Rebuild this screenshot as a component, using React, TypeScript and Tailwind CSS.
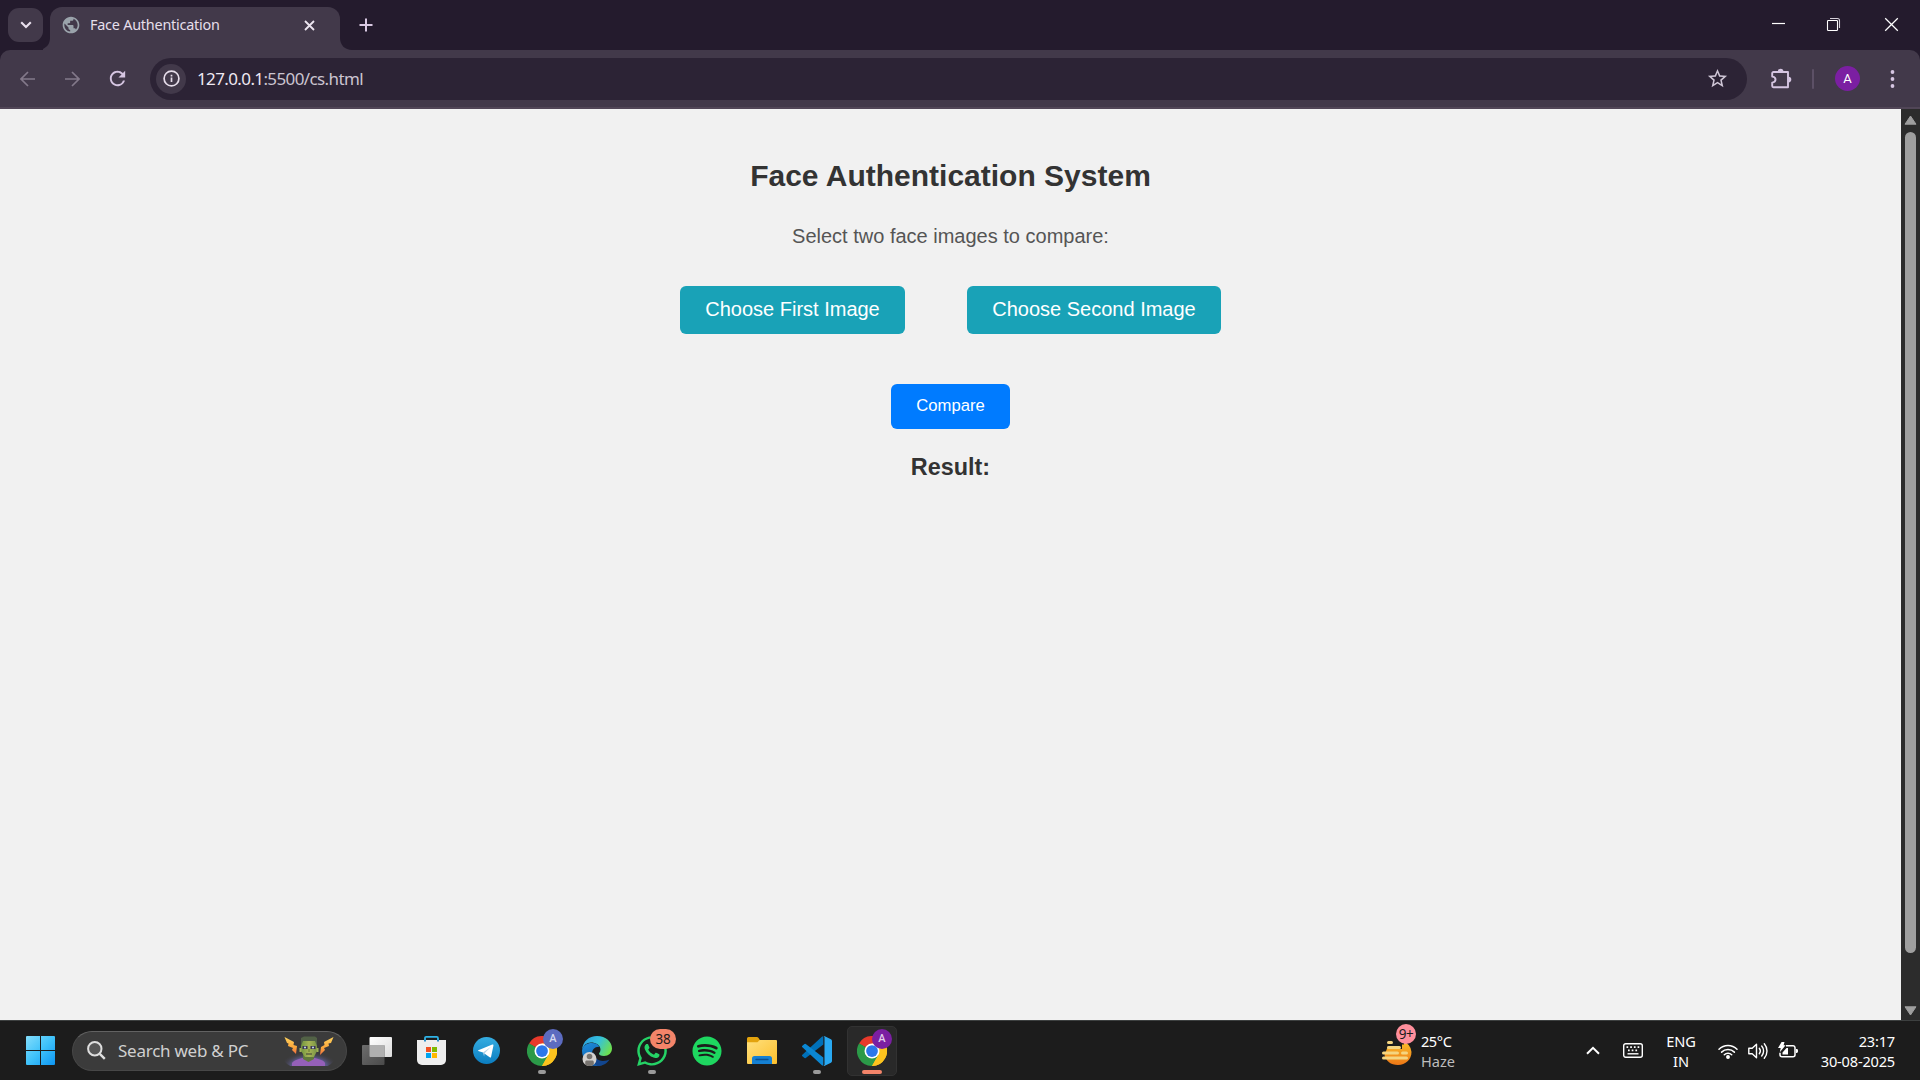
import React from "react";
import { MdPublic, MdStarBorder, MdRefresh } from "react-icons/md";
import { FaSpotify, FaWhatsapp } from "react-icons/fa";

const segoe = "font-['Noto_Sans',sans-serif]";

function TabStrip() {
  return (
    <div className="flex h-[50px] items-start bg-[#241b2d]">
      <div className="ml-2 mt-2 flex h-[34px] w-[35px] items-center justify-center rounded-[11px] bg-[#42394a]">
        <svg width="12" height="8" viewBox="0 0 12 8" fill="none" stroke="#e9e0ee" strokeWidth="2.1">
          <path d="M1.2 1.2 6 6l4.8-4.8" />
        </svg>
      </div>
      <svg className="mt-[38px]" width="7" height="12" viewBox="0 0 7 12">
        <path d="M7 0v12H-6C2 12 7 7 7 0z" fill="#42394a" />
      </svg>
      <div className="mt-[7px] flex h-[43px] w-[290px] items-start rounded-t-[12px] bg-[#42394a] pl-[11px]">
        <MdPublic className="mt-2 size-[20px]" color="#9aa3ab" />
        <div className="ml-[9px] mt-[7px] w-[220px] whitespace-nowrap text-[14.4px] leading-[22px] tracking-[-0.22px] text-[#e6dfea]">
          Face Authentication
        </div>
        <svg className="-ml-[6px] mt-[13px] shrink-0" width="11" height="11" viewBox="0 0 11 11" stroke="#ece5f0" strokeWidth="1.8">
          <path d="M1 1l9 9M10 1l-9 9" />
        </svg>
      </div>
      <svg className="mt-[38px]" width="12" height="12" viewBox="0 0 12 12">
        <path d="M0 0v12h12C5 12 0 7 0 0z" fill="#42394a" />
      </svg>
      <svg className="ml-[7px] mt-[18px]" width="14" height="14" viewBox="0 0 14 14" stroke="#d9c9e3" strokeWidth="2">
        <path d="M7 .5v13M.5 7h13" />
      </svg>
      <div className="ml-auto flex pt-[17px]">
        <svg width="15" height="14" viewBox="0 0 15 14" stroke="#fff" strokeWidth="1.2">
          <path d="M1 6.5h13" />
        </svg>
        <svg className="ml-[40px]" width="16" height="16" viewBox="0 0 16 16" fill="none" stroke="#fff" strokeWidth="1.1">
          <rect x="1.5" y="3.5" width="10" height="10" rx=".8" />
          <path d="M4 1.5h7.5a2 2 0 0 1 2 2V11" stroke="#d6d1da" />
        </svg>
        <svg className="ml-[42px] mr-[21px]" width="15" height="15" viewBox="0 0 15 15" stroke="#fff" strokeWidth="1.25">
          <path d="M1.2 1.2l12.6 12.6M13.8 1.2 1.2 13.8" />
        </svg>
      </div>
    </div>
  );
}

function Toolbar() {
  return (
    <div className="h-[59px] bg-[#241b2d]">
      <div className="flex h-[59px] items-center rounded-t-[10px] border-b-2 border-[#514657] bg-[#42394a]">
        <svg className="ml-5" width="15" height="16" viewBox="0 0 15 16" fill="none" stroke="#83798a" strokeWidth="1.7">
          <path d="M15 8H1.2M8 1 1 8l7 7" />
        </svg>
        <svg className="ml-[30px]" width="15" height="16" viewBox="0 0 15 16" fill="none" stroke="#83798a" strokeWidth="1.7">
          <path d="M0 8h13.8M7 1l7 7-7 7" />
        </svg>
        <MdRefresh className="ml-[26px] size-[23px]" color="#d6c6e2" />
        <div className="ml-[21px] flex h-[42px] w-[1597px] items-center rounded-full bg-[#2c2335] pl-[6px]">
          <div className="flex size-[30px] items-center justify-center rounded-full bg-[#42394a]">
            <svg width="17" height="17" viewBox="0 0 17 17" fill="none" stroke="#e6ddea" strokeWidth="1.7">
              <circle cx="8.5" cy="8.5" r="7.4" />
              <path d="M8.5 7.6v4.4M8.5 4.7v1.7" />
            </svg>
          </div>
          <div className="ml-[11px] whitespace-nowrap text-[17px] tracking-[-0.62px] text-[#cbc4d0]">
            <span className="text-[#efe8f2]">127.0.0.1</span>:5500/cs.html
          </div>
          <MdStarBorder className="ml-auto mr-[18px] size-[23px]" color="#cfc6d6" />
        </div>
        <svg className="ml-[23px]" width="23" height="22" viewBox="0 0 23 22">
          <path d="M3.4 4H18v15.2H3.4a1.2 1.2 0 0 1-1.2-1.2v-3.4c4.4-.3 4.4-5.700 0-6V5.200A1.200 1.200 0 0 1 3.400 4z" fill="none" stroke="#d6c6e2" strokeWidth="1.9" strokeLinejoin="round" />
          <path d="M7.800 3.500a2.800 2.800 0 0 1 5.600 0zM18.500 8.800a2.800 2.800 0 0 1 0 5.600z" fill="#d6c6e2" />
        </svg>
        <div className="ml-[19px] h-5 w-[2px] rounded bg-[#5c5066]" />
        <div className="ml-[21px] flex size-[25px] items-center justify-center rounded-full bg-[#7b1fa2] font-['Roboto',sans-serif] text-[13px] text-white">A</div>
        <svg className="ml-[30px]" width="5" height="18" viewBox="0 0 5 18" fill="#d6c6e2">
          <circle cx="2.500" cy="2" r="1.900" />
          <circle cx="2.500" cy="9" r="1.900" />
          <circle cx="2.500" cy="16" r="1.900" />
        </svg>
      </div>
    </div>
  );
}

function Page() {
  return (
    <div className="flex h-[911px] bg-[#f1f1f1] font-['Liberation_Sans',Arial,sans-serif]">
      <main className="flex flex-1 flex-col items-center">
        <h2 className="mt-[50px] text-[30px] font-bold leading-[34px] text-[#333]">Face Authentication System</h2>
        <p className="mt-[32px] text-[20px] leading-[23px] text-[#555]">Select two face images to compare:</p>
        <div className="mt-[38px] flex gap-[62px]">
          <button className="h-[48px] w-[225px] rounded-[6px] bg-[#19a2b7] pb-[2px] text-[20px] text-white">Choose First Image</button>
          <button className="h-[48px] w-[254px] rounded-[6px] bg-[#19a2b7] pb-[2px] text-[20px] text-white">Choose Second Image</button>
        </div>
        <button className="mt-[50px] h-[45px] w-[119px] rounded-[6px] bg-[#007bff] pb-[2px] text-[16.67px] text-white">Compare</button>
        <h3 className="mt-[25px] text-[23.4px] font-bold leading-[27px] text-[#333]">Result:</h3>
      </main>
      <div className="flex w-[19px] flex-col items-center bg-[#2c2c2c]">
        <svg className="mt-[6px]" width="13" height="10" viewBox="0 0 13 10">
          <path d="M6.500 1 12 9.200H1z" fill="#9f9f9f" stroke="#9f9f9f" strokeLinejoin="round" />
        </svg>
        <div className="mt-[7px] h-[821px] w-[11px] rounded-full bg-[#9f9f9f]" />
        <svg className="mt-[53px]" width="13" height="10" viewBox="0 0 13 10">
          <path d="M6.500 9 12 .8H1z" fill="#9f9f9f" stroke="#9f9f9f" strokeLinejoin="round" />
        </svg>
      </div>
    </div>
  );
}

function Cell({ children, indicator, badge }: { children: React.ReactNode; indicator?: string; badge?: React.ReactNode }) {
  return (
    <div className="relative flex h-[59px] w-[55px] shrink-0 items-center justify-center">
      {children}
      {badge}
      {indicator && <div className={`absolute bottom-[6px] h-[4px] rounded-full ${indicator}`} />}
    </div>
  );
}

function Chrome() {
  return (
    <svg width="30" height="30" viewBox="0 0 48 48" className="relative">
      <path d="M24 24 3.200 12A24 24 0 0 1 44.800 12z" fill="#e8392b" />
      <path d="M24 24 44.800 12A24 24 0 0 1 24 48z" fill="#fcc31e" />
      <path d="M24 24 24 48A24 24 0 0 1 3.200 12z" fill="#2b9a48" />
      <path d="M24 12h20.800L34.400 30 24 48l10.400-18z" fill="#fcc31e" />
      <path d="M3.200 12 13.600 30 24 24z" fill="#2b9a48" />
      <path d="M13.600 30 24 48 34.400 30z" fill="#2b9a48" />
      <path d="M34.400 30 24 48a24 24 0 0 0 20.800-36H24z" fill="#fcc31e" />
      <circle cx="24" cy="24" r="12" fill="#fff" />
      <circle cx="24" cy="24" r="9.400" fill="#2b77ea" />
    </svg>
  );
}

function Frankenstein() {
  return (
    <svg width="52" height="30" viewBox="0 0 52 30">
      <defs>
        <radialGradient id="glow" cx=".5" cy=".85" r=".55">
          <stop offset="0" stopColor="#7b70e0" />
          <stop offset=".6" stopColor="#62609c" stopOpacity=".8" />
          <stop offset="1" stopColor="#3c3c3c" stopOpacity="0" />
        </radialGradient>
        <linearGradient id="skin" x1="0" y1="0" x2="1" y2="0">
          <stop offset="0" stopColor="#71953f" />
          <stop offset=".5" stopColor="#a7b455" />
          <stop offset="1" stopColor="#799445" />
        </linearGradient>
        <linearGradient id="bolt" x1="0" y1="0" x2="0" y2="1">
          <stop offset="0" stopColor="#ffd45e" />
          <stop offset=".6" stopColor="#fba63b" />
          <stop offset="1" stopColor="#ef6f42" />
        </linearGradient>
      </defs>
      <ellipse cx="26" cy="21" rx="26" ry="13" fill="url(#glow)" />
      <path d="M9 30v-3c2-3 6-3.500 10-5h13c4 1.500 9 2 10 5v3z" fill="#9560b9" />
      <path d="M20 17h11v6l-5.500 3-5.500-3z" fill="#60783d" />
      <path d="M18 2h16v13l-3 6h-9l-4-6z" fill="url(#skin)" />
      <path d="M18 10V2l3-1.500h11L34 2v8l-2-5H20z" fill="#526246" />
      <path d="M16.500 12h2v4h-2zM33.500 12h2v4h-2z" fill="#9eaf54" />
      <path d="M19.500 10h5v3h-5zM27.500 10h5v3h-5z" fill="#3d3654" />
      <circle cx="22" cy="11.500" r="1" fill="#c9e4ee" />
      <circle cx="30" cy="11.500" r="1" fill="#c9e4ee" />
      <path d="M25 13h2v3h-2z" fill="#839442" />
      <path d="M23 18h6" stroke="#4c4d3c" strokeWidth="1.200" />
      <path d="M1.500 1 11 6l-.5 3 3.500 1-1 8-4-4 1-2-5-2 .500-2.500L4 7z" fill="url(#bolt)" />
      <path d="M50.500 1 41 6l.5 3-3.500 2-1 8 5-5-1-2 5-2-.500-2.500L48 7z" fill="url(#bolt)" />
    </svg>
  );
}

function SearchBox() {
  return (
    <div className="ml-[17px] flex h-[40px] w-[275px] items-center rounded-full border border-t-[#626262] border-[#474747] bg-[#3b3b3b] pl-[14px]">
      <svg width="19" height="19" viewBox="0 0 19 19" fill="none" stroke="#dedede" strokeWidth="2">
        <circle cx="7.800" cy="7.800" r="6.700" fill="#565656" />
        <path d="M12.800 12.800 17.800 17.800" strokeWidth="2.400" />
      </svg>
      <div className="ml-[12px] whitespace-nowrap text-[17px] tracking-[-0.25px] text-[#d0d0d0]">Search web &amp; PC</div>
      <div className="ml-auto mr-[11px]">
        <Frankenstein />
      </div>
    </div>
  );
}

function Taskbar() {
  return (
    <div className="flex h-[60px] items-center border-t border-[#3d4040] bg-[#1c1c1c]">
      <svg className="ml-[26px]" width="29" height="29" viewBox="0 0 29 29">
        <defs>
          <linearGradient id="win" x1="0" y1="0" x2="29" y2="29" gradientUnits="userSpaceOnUse">
            <stop offset="0" stopColor="#84ddfb" />
            <stop offset=".5" stopColor="#3fc2fa" />
            <stop offset="1" stopColor="#0d95f2" />
          </linearGradient>
        </defs>
        <path d="M1 0h13v14H0V1a1 1 0 0 1 1-1zM15 0h13a1 1 0 0 1 1 1v13H15zM0 15h14v14H1a1 1 0 0 1-1-1zM15 15h14v13a1 1 0 0 1-1 1H15z" fill="url(#win)" />
      </svg>
      <SearchBox />
      <div className="ml-[2px] flex">
        <Cell>
          <svg width="30" height="28" viewBox="0 0 30 28">
            <defs>
              <linearGradient id="tvf" x1="0" y1="0" x2="1" y2="1">
                <stop offset="0" stopColor="#fff" />
                <stop offset="1" stopColor="#dcdcdc" />
              </linearGradient>
              <linearGradient id="tvb" x1="0" y1="0" x2="1" y2="1">
                <stop offset="0" stopColor="#6d6d6d" />
                <stop offset="1" stopColor="#4a4a4a" />
              </linearGradient>
            </defs>
            <rect x="7.500" width="22.500" height="20" rx="1" fill="url(#tvf)" />
            <rect y="8" width="22.500" height="20" rx="1" fill="url(#tvb)" />
            <path d="M7.500 8h15v12h-14a1 1 0 0 1-1-1z" fill="#b0b0b0" />
          </svg>
        </Cell>
        <Cell>
          <svg width="29" height="29" viewBox="0 0 29 29">
            <path d="M8 6V2.200C8 1.300 8.400.9 9.200.9h10.600c.8 0 1.200.4 1.200 1.300V6" fill="none" stroke="#2fb4e8" strokeWidth="1.800" />
            <path d="M0 4h29v20a5 5 0 0 1-5 5H5a5 5 0 0 1-5-5z" fill="#eeeeee" />
            <path d="M8 4v1.500M21 4v1.500" stroke="#1583c4" strokeWidth="1.800" />
            <path d="M9 11h5v5H9z" fill="#f25022" />
            <path d="M15 11h5v5h-5z" fill="#7fba00" />
            <path d="M9 17h5v5H9z" fill="#00a4ef" />
            <path d="M15 17h5v5h-5z" fill="#ffb900" />
          </svg>
        </Cell>
        <Cell>
          <svg width="27" height="27" viewBox="0 0 27 27">
            <defs>
              <linearGradient id="tg" x1="0" y1="0" x2="0" y2="1">
                <stop offset="0" stopColor="#35ade1" />
                <stop offset="1" stopColor="#0b7dc0" />
              </linearGradient>
            </defs>
            <circle cx="13.500" cy="13.500" r="13.500" fill="url(#tg)" />
            <path d="M5.300 13.200 19.300 7.600c.8-.3 1.300.2 1.100 1.100l-2.300 11c-.2.9-.7 1-1.400.6l-6.700-4.700L6 14.300c-1.100-.4-1.100-.9-.7-1.100z" fill="#fff" />
            <path d="M10 15.600 18 9.800l-6.400 6.500-.5 3.200z" fill="#b5d3e8" />
          </svg>
        </Cell>
        <Cell
          indicator="w-[8px] bg-[#9a9a9a]"
          badge={<div className="absolute left-[29px] top-[8px] flex size-[20px] items-center justify-center rounded-full bg-[#5c6bc0] font-['Roboto',sans-serif] text-[11px] font-medium text-[#d5d9f0]">A</div>}
        >
          <Chrome />
        </Cell>
        <Cell>
          <svg width="30" height="30" viewBox="0 0 30 30">
            <defs>
              <linearGradient id="e1" x1="0" y1=".2" x2="1" y2=".6">
                <stop offset="0" stopColor="#2a9fe0" />
                <stop offset=".5" stopColor="#35c1dc" />
                <stop offset="1" stopColor="#6fe04c" />
              </linearGradient>
              <linearGradient id="e2" x1="0" y1="0" x2=".4" y2="1">
                <stop offset="0" stopColor="#1e8fdc" />
                <stop offset="1" stopColor="#0f5cae" />
              </linearGradient>
            </defs>
            <path d="M0 14C1 5 7 0 15 0c9 0 15 6 15 12.500 0 4.500-3.500 7.500-8 7.500-3.500 0-5-1.200-5-2.200 0-1 1.500-1.600 1.500-4.300C18.500 9 13.500 6.500 9 6.500S1.500 9.500 0 14z" fill="url(#e1)" />
            <path d="M0 14.500C1 9.500 5 7 9.500 7c4 0 7 1.700 8 3.800-4.500-.5-7.500 2.700-7.500 7.200 0 6.500 5 10.500 10 11C8 33 0 24 0 14.500z" fill="url(#e2)" />
            <path d="M12 16c-.5 5 3.500 9 9 9 3 0 5-.8 6.500-1.700C26 27 21 30 16 30 10 28 8.500 20 12 16z" fill="#12468f" />
            <circle cx="7.500" cy="23" r="7" fill="#d3d1cf" />
            <circle cx="7.500" cy="20.500" r="2.800" fill="#77736f" />
            <path d="M3.200 28.400v-2.100c0-1 .6-1.700 1.600-1.700h5.400c1 0 1.600.7 1.600 1.700v2.100a7 7 0 0 1-8.600 0z" fill="#77736f" />
          </svg>
        </Cell>
        <Cell
          indicator="w-[8px] bg-[#9a9a9a]"
          badge={<div className="absolute left-[26px] top-[8px] flex h-[20px] w-[26px] items-center justify-center rounded-full bg-[#f38469] text-[13.500px] tracking-[-0.3px] text-[#1c1c1c]">38</div>}
        >
          <FaWhatsapp className="size-[34px]" color="#25d366" />
        </Cell>
        <Cell>
          <FaSpotify className="size-[30px]" color="#1ed760" />
        </Cell>
        <Cell>
          <svg width="30" height="27" viewBox="0 0 30 27">
            <defs>
              <linearGradient id="fold" x1="0" y1="0" x2="1" y2="1">
                <stop offset="0" stopColor="#ffe07d" />
                <stop offset="1" stopColor="#fcbf2c" />
              </linearGradient>
            </defs>
            <path d="M0 1.500A1.500 1.500 0 0 1 1.500 0h8.300c.8 0 1.300.3 1.800.9L13.500 4v5H0z" fill="#e3a30d" />
            <path d="M0 5.200h10.500l2.200-2.200H29a1 1 0 0 1 1 1v22a1 1 0 0 1-1 1H1a1 1 0 0 1-1-1z" fill="url(#fold)" />
            <path d="M5 27v-5.500A2.500 2.500 0 0 1 7.500 19h15a2.500 2.500 0 0 1 2.500 2.500V27z" fill="#1580d3" />
            <path d="M9 22.500h12" stroke="#0b4f91" strokeWidth="1.300" strokeLinecap="round" />
          </svg>
        </Cell>
        <Cell indicator="w-[8px] bg-[#9a9a9a]">
          <svg width="30" height="30" viewBox="0 0 100 100">
            <path d="M1.300 62.500a3.300 3.300 0 0 0 0 4.900l6 5.500a4.200 4.200 0 0 0 5.300.2L71 28V4L68 1z" fill="#0070b8" />
            <path d="M1.300 37.500a3.300 3.300 0 0 1 0-4.900l6-5.500a4.200 4.200 0 0 1 5.300-.2L71 72v24l-3 3z" fill="#0b87d3" />
            <path d="M70.900 99.300a6.200 6.200 0 0 0 5-.2l20.600-9.900A6.200 6.200 0 0 0 100 83.600V16.400a6.200 6.200 0 0 0-3.500-5.600L75.900.9a6.200 6.200 0 0 0-7.100 1.200c2.300-2.300 6.200-.7 6.200 2.600v90.600c0 3.300-3.900 4.900-6.200 2.600z" fill="#29a9f2" />
          </svg>
        </Cell>
        <Cell
          indicator="w-[20px] bg-[#f38469]"
          badge={<div className="absolute left-[28px] top-[8px] flex size-[20px] items-center justify-center rounded-full bg-[#7b1fa2] font-['Roboto',sans-serif] text-[11px] font-medium text-[#e2cdea]">A</div>}
        >
          <div className="flex size-[50px] items-center justify-center rounded-[5px] border border-[#323232] bg-[#292929]">
            <Chrome />
          </div>
        </Cell>
      </div>

      <div className="ml-auto flex h-[59px] items-center text-[14.600px] leading-[20px] text-white">
        <div className="relative flex items-center">
          <svg width="30" height="30" viewBox="0 0 30 30">
            <defs>
              <linearGradient id="sun" x1="0" y1="0" x2="0" y2="1">
                <stop offset="0" stopColor="#fcc22c" />
                <stop offset="1" stopColor="#ed7716" />
              </linearGradient>
            </defs>
            <path d="M6 10a13 13 0 0 1 23.500 6c0 7.500-6 13-13.500 13S4 25 2.500 19z" fill="url(#sun)" />
            <path d="M5 6h17M6 10.500h14" stroke="#1c1c1c" strokeWidth="5" />
            <path d="M6.500 6.500h3M6.500 11.500h11M1.500 17h14M20.500 17h4M1.500 22h23" stroke="#f5d580" strokeWidth="3" strokeLinecap="round" />
          </svg>
          <div className="absolute left-[14px] top-[-7px] flex size-[20px] items-center justify-center rounded-full bg-[#ff8f9c] text-[13.500px] tracking-[-0.5px] text-[#1c1c1c]">9+</div>
          <div className="ml-[9px]">
            <div className="tracking-[-0.4px]">25°C</div>
            <div className="text-[#bdbdbd]">Haze</div>
          </div>
        </div>
        <svg className="ml-[131px]" width="14" height="9" viewBox="0 0 14 9" fill="none" stroke="#fff" strokeWidth="2">
          <path d="M1 7.800 7 1.800l6 6" />
        </svg>
        <svg className="ml-[23px]" width="20" height="15" viewBox="0 0 20 15" fill="none" stroke="#fff" strokeWidth="1.400">
          <rect x=".7" y=".7" width="18.600" height="13.600" rx="2" />
          <path d="M3.500 4.200h13M5 7.400h10" strokeWidth="1.700" strokeDasharray="1.700 2" />
          <path d="M4.500 10.800h11" />
        </svg>
        <div className="ml-[22px] w-[32px] text-center">
          <div className="-tracking-[0.1px]">ENG</div>
          <div>IN</div>
        </div>
        <svg className="ml-[21px]" width="20" height="16" viewBox="0 0 20 16" fill="none" stroke="#fff" strokeWidth="1.500" strokeLinecap="round">
          <path d="M1 6.300a12.700 12.700 0 0 1 18 0M3.600 9.100a9 9 0 0 1 12.800 0M6.300 11.700a5.200 5.200 0 0 1 7.400 0" />
          <circle cx="10" cy="14" r="1.200" fill="#fff" />
        </svg>
        <svg className="ml-[10px]" width="20" height="18" viewBox="0 0 20 18" fill="none" stroke="#fff" strokeWidth="1.400" strokeLinejoin="round" strokeLinecap="round">
          <path d="M.8 6.200v5.600h3.400l4.300 3.900V2.300L4.200 6.200z" />
          <path d="M11.300 6.300a4.300 4.300 0 0 1 0 5.400M13.700 4a7.600 7.600 0 0 1 0 10M16.300 1.800a11 11 0 0 1 0 14.400" />
        </svg>
        <svg className="ml-[10px]" width="20" height="17" viewBox="0 0 20 17">
          <path d="M8 3.700h7a2 2 0 0 1 2 2v7a2 2 0 0 1-2 2H4a2 2 0 0 1-2-2v-2" fill="none" stroke="#fff" strokeWidth="1.500" />
          <path d="M4.500 12.500V10.500L8.500 6H10v6.500zM18 7h.7q1.300 0 1.300 1.400v1.200q0 1.400-1.300 1.400H18zM3.600 0h2.900L5.600 3.200h2L1.800 10.300 2.700 6H0z" fill="#fff" />
        </svg>
        <div className="ml-[17px] mr-[25px] w-[80px] text-right">
          <div className="tracking-[-0.2px]">23:17</div>
          <div className="tracking-[-0.2px]">30-08-2025</div>
        </div>
      </div>
    </div>
  );
}

export default function App() {
  return (
    <div className={`flex h-[1080px] w-[1920px] flex-col overflow-hidden ${segoe}`}>
      <TabStrip />
      <Toolbar />
      <Page />
      <Taskbar />
    </div>
  );
}
